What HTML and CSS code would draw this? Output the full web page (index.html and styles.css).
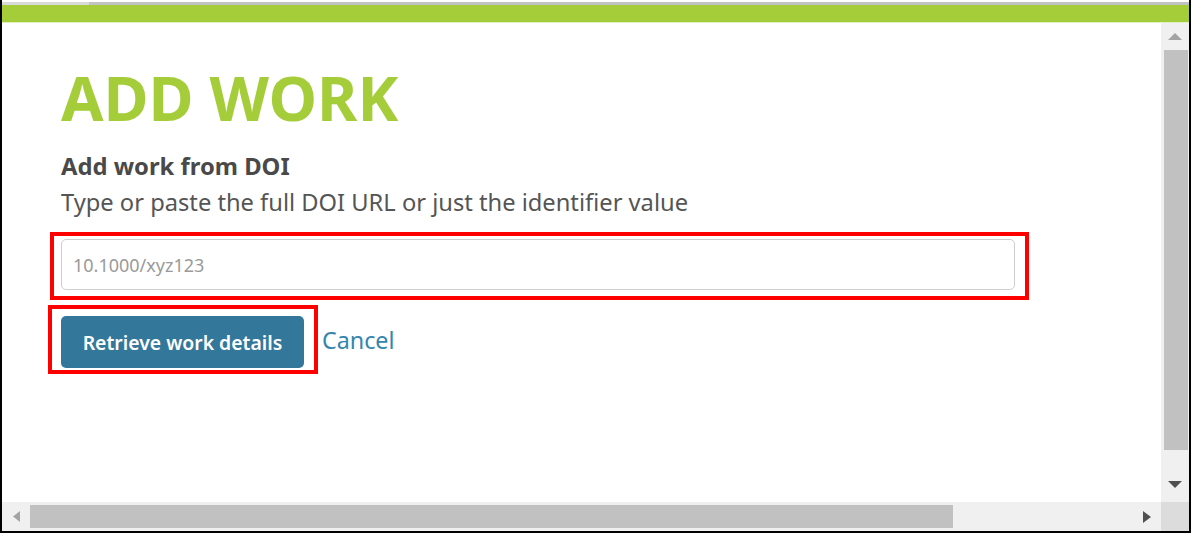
FILE: index.html
```html
<!DOCTYPE html>
<html lang="en">
<head>
<meta charset="utf-8">
<title>Add work</title>
<link rel="stylesheet" href="styles.css">
</head>
<body>
<div class="frame">
  <div class="topgap"></div>
  <div class="topstrip"><div class="ts-light"></div><div class="ts-dark"></div></div>
  <div class="greenbar"></div>
  <div class="greenline"></div>
  <div class="viewport">
    <div class="content">
      <h1 class="title">ADD WORK</h1>
      <h2 class="subtitle">Add work from DOI</h2>
      <p class="hint">Type or paste the full DOI URL or just the identifier value</p>
      <div class="annot-wrap input-wrap">
        <input class="doi-input" type="text" placeholder="10.1000/xyz123">
        <div class="annot annot-input"></div>
      </div>
      <div class="actions">
        <div class="annot-wrap">
          <button class="btn-primary" type="button">Retrieve work details</button>
          <div class="annot annot-btn"></div>
        </div>
        <a class="cancel" href="#">Cancel</a>
      </div>
    </div>
    <div class="vscroll">
      <div class="sb-btn">
        <svg width="14" height="7" viewBox="0 0 14 7"><polygon points="7,0 14,7 0,7" fill="#a3a3a3"/></svg>
      </div>
      <div class="vthumb"></div>
      <div class="sb-spacer"></div>
      <div class="sb-btn sb-btn-down">
        <svg width="14" height="7" viewBox="0 0 14 7"><polygon points="0,0 14,0 7,7" fill="#505050"/></svg>
      </div>
    </div>
  </div>
  <div class="hscroll">
    <div class="hs-btn">
      <svg width="7" height="11" viewBox="0 0 7 11"><polygon points="7,0 7,11 0,5.5" fill="#a3a3a3"/></svg>
    </div>
    <div class="hthumb"></div>
    <div class="sb-spacer"></div>
    <div class="hs-btn">
      <svg width="8" height="12" viewBox="0 0 8 12"><polygon points="0,0 8,6 0,12" fill="#505050"/></svg>
    </div>
    <div class="corner"></div>
  </div>
</div>
</body>
</html>
```
FILE: styles.css
```css
html, body {
  margin: 0;
  padding: 0;
  background: #ffffff;
}

.frame {
  width: 1191px;
  height: 533px;
  box-sizing: border-box;
  border-left: 2px solid #000;
  border-right: 2px solid #000;
  border-bottom: 2px solid #000;
  display: flex;
  flex-direction: column;
  overflow: hidden;
  font-family: "Noto Sans", "Open Sans", sans-serif;
}

.topgap {
  height: 2px;
  background: #ffffff;
}

.topstrip {
  height: 3px;
  display: flex;
}

.ts-light {
  width: 87px;
  background: #d9d9d9;
}

.ts-dark {
  flex: 1;
  background: #c2c2c2;
}

.greenbar {
  height: 17px;
  background: #a4cd39;
}

.greenline {
  height: 1px;
  background: #e2efc2;
}

.viewport {
  flex: 1;
  display: flex;
  min-height: 0;
}

.content {
  flex: 1;
  padding: 39px 0 0 59px;
}

.title {
  margin: 0;
  font-size: 61.5px;
  line-height: 70px;
  font-weight: 700;
  color: #a4cd39;
  letter-spacing: 0;
}

.subtitle {
  margin: 20px 0 0;
  font-size: 23.8px;
  line-height: 28px;
  font-weight: 700;
  color: #494949;
}

.hint {
  margin: 8px 0 0;
  font-size: 23.7px;
  line-height: 28px;
  color: #555555;
}

.annot-wrap {
  position: relative;
}

.input-wrap {
  margin-top: 23px;
  width: 954px;
}

.doi-input {
  display: block;
  box-sizing: border-box;
  width: 954px;
  height: 51px;
  border: 1px solid #cfcfcf;
  border-radius: 5px;
  padding: 0 11px;
  font-family: "Noto Sans", "Open Sans", sans-serif;
  font-size: 18px;
  color: #333;
  background: #fff;
  outline: none;
}

.doi-input::placeholder {
  color: #9a9a9a;
}

.annot {
  position: absolute;
  border: 4px solid #ff0000;
  pointer-events: none;
}

.annot-input {
  top: -7px;
  left: -11px;
  right: -14px;
  bottom: -10px;
}

.actions {
  margin-top: 26px;
  display: flex;
  align-items: center;
  gap: 18px;
}

.btn-primary {
  display: block;
  width: 243px;
  height: 52px;
  border: none;
  border-radius: 5px;
  background: #33789a;
  color: #ffffff;
  font-family: "Noto Sans", "Open Sans", sans-serif;
  font-size: 19.4px;
  font-weight: 600;
  padding: 0;
}

.annot-btn {
  top: -11px;
  left: -13px;
  right: -14px;
  bottom: -6px;
}

.cancel {
  color: #3486ad;
  font-size: 23.3px;
  text-decoration: none;
  margin-top: -5px;
}

.vscroll {
  width: 28px;
  background: #f0f0f0;
  display: flex;
  flex-direction: column;
  align-items: center;
}

.sb-btn {
  height: 27px;
  width: 100%;
  display: flex;
  align-items: center;
  justify-content: center;
}

.sb-btn svg {
  display: block;
}

.sb-btn-down {
  height: 26px;
  align-items: flex-start;
  padding-top: 5px;
  box-sizing: border-box;
}

.vthumb {
  width: 24px;
  height: 400px;
  background: #c1c1c1;
  margin-left: 1px;
}

.sb-spacer {
  flex: 1;
}

.hscroll {
  height: 29px;
  background: #f0f0f0;
  display: flex;
  align-items: center;
}

.hs-btn {
  width: 28px;
  height: 29px;
  display: flex;
  align-items: center;
  justify-content: center;
}

.hthumb {
  width: 923px;
  height: 23px;
  background: #c1c1c1;
}

.corner {
  width: 28px;
  height: 29px;
  background: #dcdcdc;
}
```
